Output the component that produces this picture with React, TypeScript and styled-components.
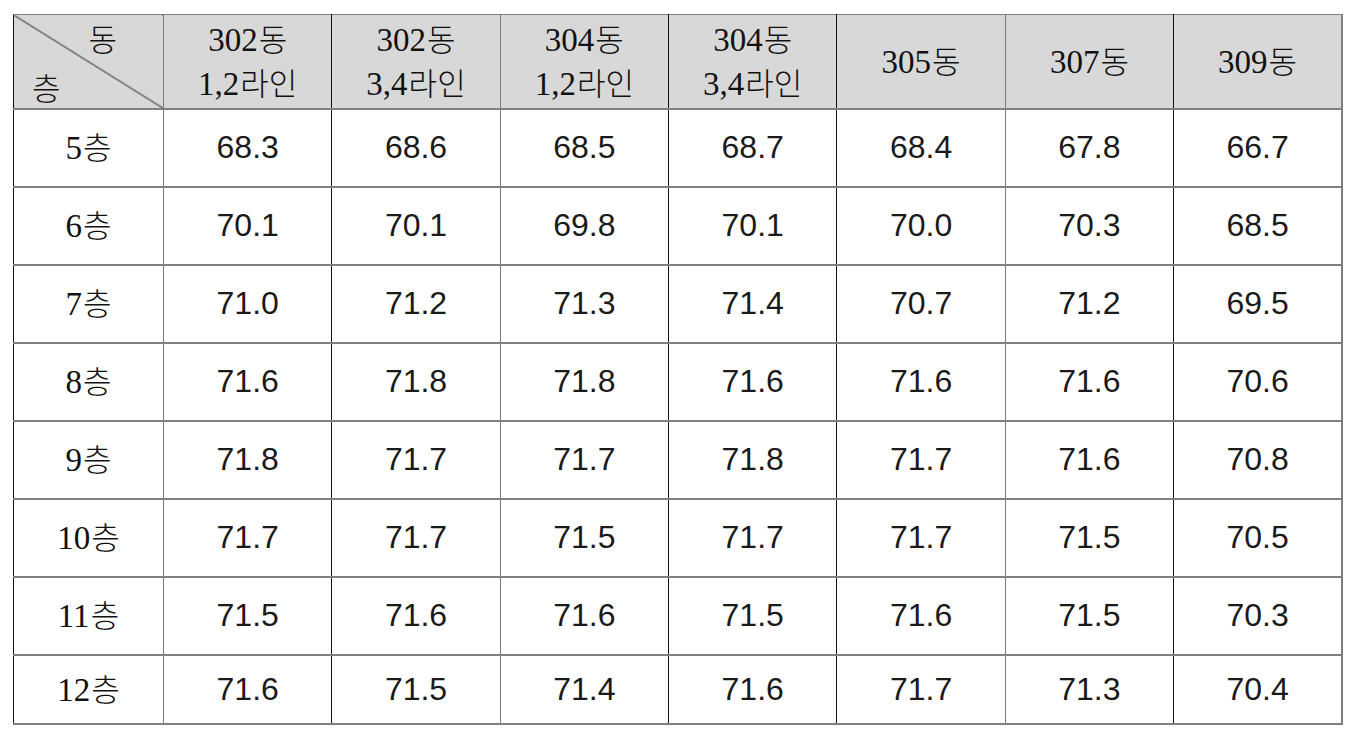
import * as React from 'react';
import styled, {createGlobalStyle} from 'styled-components';

const GlobalStyle = createGlobalStyle`
	html, body {
		margin: 0;
		padding: 0;
		background: #fff;
	}
	body {
		font-family: "Liberation Serif", "Noto Sans CJK KR", serif;
		color: #111;
	}
`;

const Page = styled.div`
	padding: 14px 0 0 13px;
`;

const Table = styled.table`
	border-collapse: collapse;
	table-layout: fixed;
	width: 1330px;
	border-left: 1px solid #111;
	border-top: 1px solid #808080;
	border-right: 2px solid #808080;
	border-bottom: 2px solid #808080;
`;

const HeadRow = styled.tr`
	height: 94px;
	background: #d8d8d8;
`;

const Row = styled.tr<{$last?: boolean}>`
	height: ${p => (p.$last ? 69 : 78)}px;
`;

const Cell = styled.td<{$dark?: boolean}>`
	padding: 0;
	text-align: center;
	vertical-align: middle;
	font-weight: 400;
	border-top: 2px solid #808080;
	border-right: 1px solid ${p => (p.$dark ? '#111' : '#7a7a7a')};
`;

const HeadCell = styled(Cell)`
	border-top: none;
	font-family: "Liberation Serif", "Noto Sans CJK KR", serif;
	font-size: 33px;
	line-height: 44px;
	padding-top: 1px;
`;

const CornerCell = styled(HeadCell)`
	position: relative;
	background: linear-gradient(
		to top right,
		transparent calc(50% - 1px),
		#333 50%,
		transparent calc(50% + 1px)
	);
`;

const CornerText = styled.span<{$top?: boolean}>`
	position: absolute;
	font-family: "Noto Sans CJK KR", sans-serif;
	font-size: 31px;
	font-weight: 300;
	line-height: 1;
	${p => (p.$top ? 'top: 7px; right: 46px;' : 'bottom: 6px; left: 18px;')}
`;

const FloorCell = styled(Cell)`
	font-family: "Liberation Serif", "Noto Sans CJK KR", serif;
	font-size: 33px;
	line-height: 1;
`;

const Hangul = styled.span`
	font-family: "Noto Sans CJK KR", sans-serif;
	font-size: 31px;
	font-weight: 300;
	line-height: 1;
	margin-left: 1px;
`;

const ValueCell = styled(Cell)`
	font-family: "Liberation Sans", sans-serif;
	font-size: 32px;
	color: #1a1a1a;
`;

const columns = [
	{top: '302', bottom: '1,2라인', dark: true},
	{top: '302', bottom: '3,4라인', dark: false},
	{top: '304', bottom: '1,2라인', dark: true},
	{top: '304', bottom: '3,4라인', dark: true},
	{top: '305', dark: false},
	{top: '307', dark: true},
	{top: '309', dark: false},
];

const rows = [
	{floor: '5', values: ['68.3', '68.6', '68.5', '68.7', '68.4', '67.8', '66.7']},
	{floor: '6', values: ['70.1', '70.1', '69.8', '70.1', '70.0', '70.3', '68.5']},
	{floor: '7', values: ['71.0', '71.2', '71.3', '71.4', '70.7', '71.2', '69.5']},
	{floor: '8', values: ['71.6', '71.8', '71.8', '71.6', '71.6', '71.6', '70.6']},
	{floor: '9', values: ['71.8', '71.7', '71.7', '71.8', '71.7', '71.6', '70.8']},
	{floor: '10', values: ['71.7', '71.7', '71.5', '71.7', '71.7', '71.5', '70.5']},
	{floor: '11', values: ['71.5', '71.6', '71.6', '71.5', '71.6', '71.5', '70.3']},
	{floor: '12', values: ['71.6', '71.5', '71.4', '71.6', '71.7', '71.3', '70.4']},
];

const SplitLabel = ({text}: {text: string}) => {
	const m = text.match(/^([0-9,]+)(.*)$/);
	if (!m) return <Hangul>{text}</Hangul>;
	return <>{m[1]}<Hangul>{m[2]}</Hangul></>;
};

const App: React.FC = () =>
	<Page>
		<GlobalStyle />
		<Table>
			<colgroup>
				<col style={{width: 150}} />
				{columns.map((_, i) => <col key={i} />)}
			</colgroup>
			<thead>
				<HeadRow>
					<CornerCell as="th">
						<CornerText $top>동</CornerText>
						<CornerText>층</CornerText>
					</CornerCell>
					{columns.map((c, i) =>
						<HeadCell as="th" key={i} $dark={c.dark}>
							<div>{c.top}<Hangul>동</Hangul></div>
							{c.bottom && <div><SplitLabel text={c.bottom} /></div>}
						</HeadCell>
					)}
				</HeadRow>
			</thead>
			<tbody>
				{rows.map((r, ri) =>
					<Row key={r.floor} $last={ri === rows.length - 1}>
						<FloorCell>{r.floor}<Hangul>층</Hangul></FloorCell>
						{r.values.map((v, i) =>
							<ValueCell key={i} $dark={columns[i].dark}>{v}</ValueCell>
						)}
					</Row>
				)}
			</tbody>
		</Table>
	</Page>;

export default App;
